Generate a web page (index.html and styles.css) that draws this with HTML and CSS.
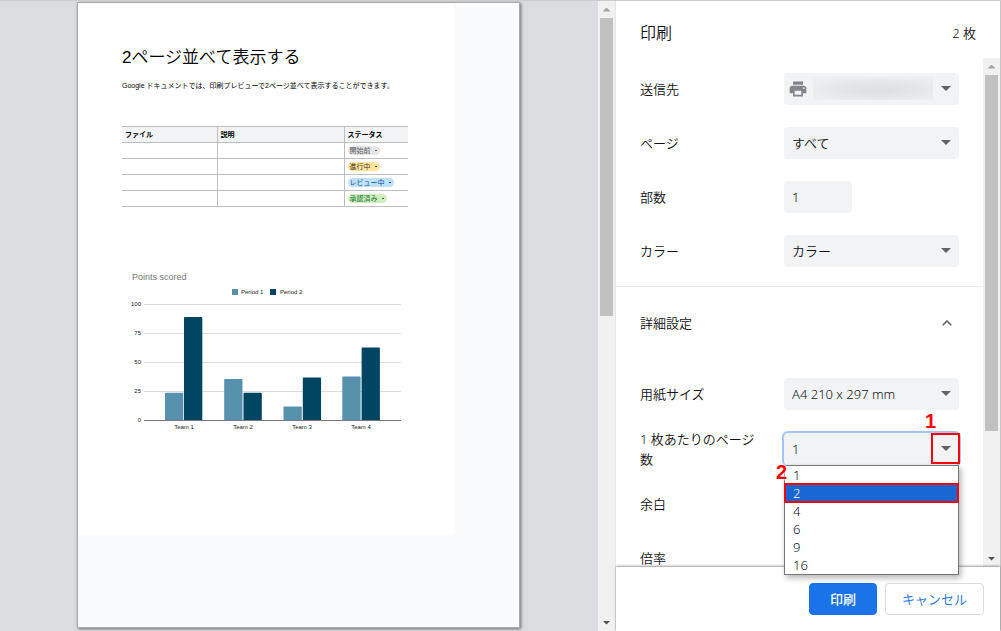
FILE: index.html
```html
<!DOCTYPE html>
<html lang="ja">
<head>
<meta charset="utf-8">
<title>印刷</title>
<link rel="stylesheet" href="styles.css">
</head>
<body>
<div class="app">
  <main class="preview">
    <div class="sheet">
      <article class="doc">
        <h1 class="doc-title">2ページ並べて表示する</h1>
        <p class="doc-text">Google ドキュメントでは、印刷プレビューで2ページ並べて表示することができます。</p>
        <table class="doc-table">
          <colgroup><col class="col-file"><col class="col-desc"><col class="col-status"></colgroup>
          <thead><tr><th>ファイル</th><th>説明</th><th>ステータス</th></tr></thead>
          <tbody>
            <tr><td></td><td></td><td><span class="chip chip-gray">開始前<i class="dash"></i></span></td></tr>
            <tr><td></td><td></td><td><span class="chip chip-yellow">進行中<i class="dash"></i></span></td></tr>
            <tr><td></td><td></td><td><span class="chip chip-blue">レビュー中<i class="dash"></i></span></td></tr>
            <tr><td></td><td></td><td><span class="chip chip-green">承認済み<i class="dash"></i></span></td></tr>
          </tbody>
        </table>
        <svg class="chart" viewBox="0 0 285 172" role="img" aria-label="Points scored">
          <text class="chart-title" x="10" y="15">Points scored</text>
          <rect class="p1" x="110" y="24" width="6" height="6"/>
          <text x="119" y="29">Period 1</text>
          <rect class="p2" x="148" y="24" width="6" height="6"/>
          <text x="158" y="29">Period 2</text>
          <g class="grid">
            <path d="M22 39.500H279M22 68.500H279M22 97.500H279M22 126.500H279"/>
          </g>
          <g class="axis">
            <text x="19" y="41">100</text><text x="19" y="70">75</text><text x="19" y="99">50</text><text x="19" y="128">25</text><text x="19" y="157">0</text>
          </g>
          <path class="p1" d="M43 155V128.500q0-.8.8-.8H60.500q.8 0 .8.800V155zM102.200 155V114.800q0-.8.8-.8h16.700q.8 0 .8.8V155zM161.500 155V142.300q0-.8.8-.8h16.700q.8 0 .8.8V155zM220.300 155V112.300q0-.8.8-.8h16.700q.8 0 .8.8V155z"/>
          <path class="p2" d="M62 155V52.800q0-.8.8-.8h16.700q.8 0 .8.8V155zM121.500 155V128.500q0-.8.8-.8h16.700q.8 0 .8.8V155zM180.800 155V113.300q0-.8.8-.8h16.700q.8 0 .8.8V155zM239.600 155V83.300q0-.8.8-.8h16.700q.8 0 .8.8V155z"/>
          <path class="base" d="M22 155.500H279"/>
          <g class="cat">
            <text x="62" y="164">Team 1</text><text x="121" y="164">Team 2</text><text x="180" y="164">Team 3</text><text x="239" y="164">Team 4</text>
          </g>
        </svg>
      </article>
    </div>
  </main>
  <div class="scrollbar" aria-hidden="true">
    <span class="sb-btn sb-up"></span>
    <div class="sb-track"><div class="sb-thumb sb-half"></div></div>
    <span class="sb-btn sb-down"></span>
  </div>
  <aside class="panel">
    <header class="panel-head">
      <h2 class="panel-title">印刷</h2>
      <span>2 枚</span>
    </header>
    <div class="panel-body">
      <form class="settings" id="settings">
        <div class="row">
          <label for="dest">送信先</label>
          <div class="select">
            <select id="dest"><option></option></select>
            <svg class="printer" viewBox="0 0 24 24" aria-hidden="true"><path d="M19 8H5c-1.660 0-3 1.340-3 3v6h4v4h12v-4h4v-6c0-1.660-1.340-3-3-3zm-3 11H8v-5h8v5zm3-7c-.550 0-1-.450-1-1s.45-1 1-1 1 .45 1 1-.450 1-1 1zm-1-9H6v4h12V3z"/></svg>
            <span class="smudge"></span>
          </div>
        </div>
        <div class="row">
          <label for="pages">ページ</label>
          <div class="select"><select id="pages"><option>すべて</option></select></div>
        </div>
        <div class="row">
          <label for="copies">部数</label>
          <input class="copies" id="copies" type="text" value="1">
        </div>
        <div class="row">
          <label for="color">カラー</label>
          <div class="select"><select id="color"><option>カラー</option></select></div>
        </div>
        <button class="more" type="button" aria-expanded="true">
          <span>詳細設定</span>
          <svg class="chevron" viewBox="0 0 10 6" aria-hidden="true"><path d="M.7 5.300 5 1l4.300 4.300"/></svg>
        </button>
        <div class="row">
          <label for="paper">用紙サイズ</label>
          <div class="select"><select id="paper"><option>A4 210 x 297 mm</option></select></div>
        </div>
        <div class="row">
          <label for="nup">1 枚あたりのページ数</label>
          <div class="select select-open">
            <select id="nup"><option>1</option></select>
            <span class="mark mark-arrow"></span>
            <b class="num num-one">1</b>
            <ul class="menu" role="listbox" aria-label="1 枚あたりのページ数">
              <li role="option">1</li>
              <li role="option" class="active" aria-selected="true">2</li>
              <li role="option">4</li>
              <li role="option">6</li>
              <li role="option">9</li>
              <li role="option">16</li>
            </ul>
            <b class="num num-two">2</b>
          </div>
        </div>
        <div class="row"><span class="label">余白</span></div>
        <div class="row"><span class="label">倍率</span></div>
      </form>
      <div class="scrollbar" aria-hidden="true">
        <span class="sb-btn sb-up"></span>
        <div class="sb-track"><div class="sb-thumb sb-most"></div></div>
        <span class="sb-btn sb-down"></span>
      </div>
    </div>
    <footer class="actions">
      <button class="btn btn-primary" type="submit" form="settings">印刷</button>
      <button class="btn" type="button">キャンセル</button>
    </footer>
  </aside>
</div>
</body>
</html>
```

FILE: styles.css
```css
* { box-sizing: border-box; }

body {
  margin: 0;
  color: #111214;
  font: 350 13px/20px "Noto Sans", "Noto Sans CJK JP", sans-serif;
}

button, input, select { font: inherit; color: inherit; }

.app {
  display: flex;
  height: 100vh;
  border-top: 1px solid #ccc;
  overflow: hidden;
}

/* Preview */
.preview {
  flex: 1;
  min-width: 0;
  display: flex;
  justify-content: center;
  align-items: flex-start;
  padding: 1px 1px 0 0;
  background: #dadce0;
}

.sheet {
  width: 443px;
  height: 626px;
  border: 1px solid #a6a8ab;
  background: #fafbfd;
  box-shadow: 1px 1px 3px rgba(0, 0, 0, .5);
}

.doc {
  width: 376px;
  min-height: 532px;
  padding: 43px 46px 0 44px;
  background: #fff;
  color: #000;
  font: 7px/12px "Liberation Sans", "Noto Sans CJK JP", sans-serif;
}

.doc-title { margin: 0 0 10px; font-size: 17px; line-height: 24px; font-weight: 350; white-space: nowrap; }
.doc-text { margin: 0 0 34px; white-space: nowrap; }

.doc-table {
  width: 286px;
  table-layout: fixed;
  border-collapse: collapse;
}
.col-file { width: 95px; }
.col-desc { width: 127px; }
.doc-table th, .doc-table td {
  height: 16px;
  padding: 0 3px;
  border: 1px solid #bcbec1;
  text-align: left;
  line-height: 10px;
}
.doc-table th { background: #f1f3f4; }
.doc-table th:first-child, .doc-table td:first-child { border-left: 0; }
.doc-table th:last-child, .doc-table td:last-child { border-right: 0; }

.chip {
  display: inline-flex;
  align-items: center;
  gap: 4px;
  padding: 0 3px 0 2px;
  border-radius: 5px;
  line-height: 9px;
  vertical-align: middle;
}
.dash { width: 2px; height: 1px; background: currentColor; }
.chip-gray { background: #e6e6e6; color: #5a5a5a; }
.chip-yellow { background: #ffe5a0; color: #473821; }
.chip-blue { background: #bfe1f6; color: #0a53a8; }
.chip-green { background: #d4edbc; color: #117a3a; }

.chart {
  display: block;
  width: 285px;
  margin-top: 58px;
  font: 6px "Liberation Sans", sans-serif;
  fill: #222;
}
.chart-title { font-size: 9px; fill: #757575; }
.p1 { fill: #5891ad; }
.p2 { fill: #004561; }
.grid { stroke: #dcdcdc; }
.base { stroke: #777; }
.axis { text-anchor: end; }
.cat { text-anchor: middle; }

/* Scrollbars */
.scrollbar {
  flex: none;
  width: 17px;
  display: flex;
  flex-direction: column;
  padding: 0 2px;
  background: #f1f1f1;
}
.sb-btn { height: 17px; display: grid; place-items: center; }
.sb-btn::before {
  content: "";
  width: 8px;
  height: 4px;
  background: #a3a3a3;
  clip-path: polygon(50% 0, 100% 100%, 0 100%);
}
.sb-down::before { background: #505050; clip-path: polygon(0 0, 100% 0, 50% 100%); }
.sb-track { flex: 1; }
.sb-thumb { background: #c1c1c1; }
.sb-half { height: 50%; }
.sb-most { height: 75%; }

/* Settings panel */
.panel {
  flex: none;
  width: 386px;
  display: flex;
  flex-direction: column;
  border-left: 1px solid #e6e6e6;
  border-right: 1px solid #c6c6c6;
  background: #fff;
}

.panel-head {
  display: flex;
  justify-content: space-between;
  align-items: center;
  height: 57px;
  padding: 6px 24px 0;
}
.panel-title { margin: 0; font-size: 16px; font-weight: inherit; }

.panel-body {
  flex: 1;
  min-height: 0;
  display: flex;
}
.settings {
  position: relative;
  z-index: 1;
  flex: 1;
  height: 100%;
  padding-top: 4px;
  clip-path: inset(0 0 -40px 0);
}

.row {
  display: grid;
  grid-template-columns: 120px 175px;
  gap: 24px;
  align-items: center;
  min-height: 54px;
  padding: 8px 24px;
}

.select { position: relative; }
.select select, .copies {
  width: 100%;
  height: 32px;
  padding: 0 8px;
  border: 0;
  border-radius: 4px;
  background: #f1f3f4;
  appearance: none;
  display: block;
}
.select::after {
  content: "";
  position: absolute;
  right: 8px;
  top: 13px;
  width: 10px;
  height: 5px;
  background: #5f6368;
  clip-path: polygon(0 0, 100% 0, 50% 100%);
}
.copies { width: 68px; }
.select-open select { outline: 2px solid #a3c5f7; }

.printer {
  position: absolute;
  left: 4px;
  top: 6px;
  width: 20px;
  height: 20px;
  fill: #80868b;
}
.smudge {
  position: absolute;
  left: 29px;
  top: 4px;
  width: 120px;
  height: 23px;
  background: radial-gradient(ellipse at 55% 55%, #dcdedf, #e3e5e6 40%, #eceeef 75%);
}

.more {
  display: flex;
  justify-content: space-between;
  align-items: center;
  width: 100%;
  height: 73px;
  margin: 8px 0;
  padding: 0 31px 0 24px;
  border: 0;
  border-top: 1px solid #e8eaed;
  background: none;
}
.chevron { width: 10px; height: 6px; fill: none; stroke: #5f6368; stroke-width: 1.6; }

.menu {
  position: absolute;
  z-index: 2;
  top: 32px;
  left: 0;
  right: 0;
  margin: 0;
  padding: 0;
  list-style: none;
  border: 1px solid #767676;
  background: #fff;
  box-shadow: 2px 3px 6px rgba(0, 0, 0, .3);
  line-height: 18px;
}
.menu li { padding-left: 8px; }
.menu .active { background: #1967d2; color: #fff; outline: 2px solid #f00; outline-offset: -1px; }

.mark {
  position: absolute;
  z-index: 3;
  top: 0;
  right: -1px;
  width: 29px;
  height: 31px;
  border: 2px solid #f00;
}
.num {
  position: absolute;
  z-index: 4;
  color: #f00;
  font: bold 20px/20px "Liberation Sans", sans-serif;
  text-shadow: 0 0 2px #fff, 0 0 2px #fff, 0 0 3px #fff;
}
.num-one { right: 23px; top: -22px; }
.num-two { left: -8px; top: 29px; }

.actions {
  position: relative;
  display: flex;
  justify-content: flex-end;
  gap: 8px;
  padding: 16px;
  background: #fff;
  box-shadow: 0 -1px 2px rgba(0, 0, 0, .4);
}
.btn {
  height: 32px;
  padding: 0 16px;
  border: 1px solid #dadce0;
  border-radius: 4px;
  background: #fff;
  color: #1a73e8;
}
.btn-primary { padding: 0 20px; border-color: #1a73e8; background: #1a73e8; color: #fff; font-weight: 500; }
```
